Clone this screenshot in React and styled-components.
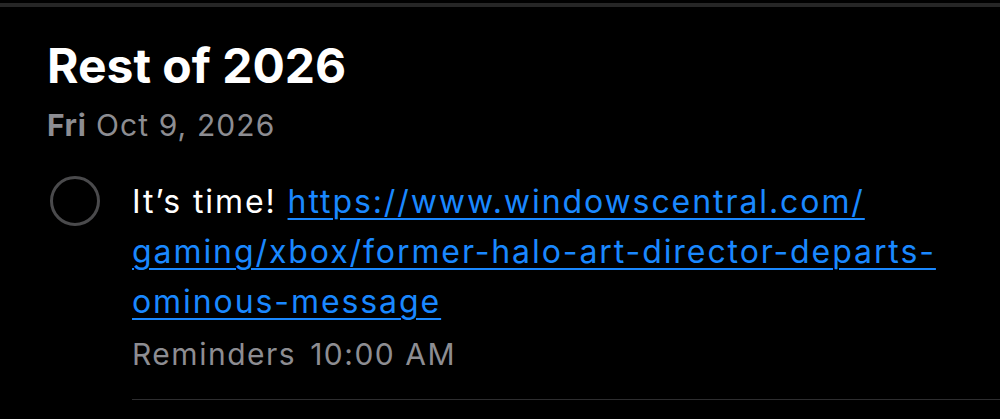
import React from "react";
import styled, { createGlobalStyle } from "styled-components";

const Global = createGlobalStyle`
  html, body { margin: 0; padding: 0; background: #000; }
  body { font-family: Inter, "Noto Sans", "Liberation Sans", sans-serif; -webkit-font-smoothing: antialiased; }
`;

const Page = styled.div`
  width: 1000px;
  height: 419px;
  background: #000;
  overflow: hidden;
  display: flex;
  flex-direction: column;
`;

const TopRule = styled.div`
  height: 4px;
  margin-top: 3px;
  background: #262626;
`;

const Section = styled.section`
  padding: 31px 0 0 47px;
  display: flex;
  flex-direction: column;
`;

const Title = styled.h1`
  margin: 0;
  font-size: 48px;
  font-weight: 700;
  color: #fff;
  line-height: 56px;
  letter-spacing: 0px;
`;

const DateLine = styled.div`
  margin-top: 13px;
  font-size: 30px;
  line-height: 36px;
  color: #8d8d92;
  letter-spacing: 1.1px;
  b { font-weight: 700; letter-spacing: 0.6px; }
`;

const Row = styled.div`
  display: flex;
  align-items: flex-start;
  margin-top: 30px;
`;

const Check = styled.div`
  width: 44px;
  height: 44px;
  border: 3px solid #4a4a4c;
  border-radius: 50%;
  margin-top: 3px;
  margin-left: 3px;
  flex-shrink: 0;
`;

const Body = styled.div`
  margin-left: 32px;
  padding-top: 4px;
  flex: 1;
  display: flex;
  flex-direction: column;
`;

const Text = styled.div`
  font-size: 32px;
  line-height: 50px;
  color: #fff;
  letter-spacing: 1.92px;
`;

const Link = styled.a`
  color: #1a88ff;
  text-decoration: underline;
  text-decoration-thickness: 2px;
  text-underline-offset: 5px;
`;

const Meta = styled.div`
  margin-top: 9px;
  font-size: 30px;
  line-height: 36px;
  color: #8d8d92;
  letter-spacing: 1.5px;
  display: flex;
  gap: 14px;
`;

const Separator = styled.div`
  margin-top: 27px;
  height: 1px;
  background: #2e2e30;
`;

export default function App() {
  return (
    <>
      <Global />
      <Page>
        <TopRule />
        <Section>
          <Title>Rest of 2026</Title>
          <DateLine><b>Fri</b> Oct 9, 2026</DateLine>
          <Row>
            <Check />
            <Body>
              <Text>
                It’s time!{" "}
                <Link href="#">
                  https://www.windowscentral.com/
                  <br />
                  gaming/xbox/former-halo-art-director-departs-
                  <br />
                  ominous-message
                </Link>
              </Text>
              <Meta>
                <span>Reminders</span>
                <span>10:00 AM</span>
              </Meta>
              <Separator />
            </Body>
          </Row>
        </Section>
      </Page>
    </>
  );
}
